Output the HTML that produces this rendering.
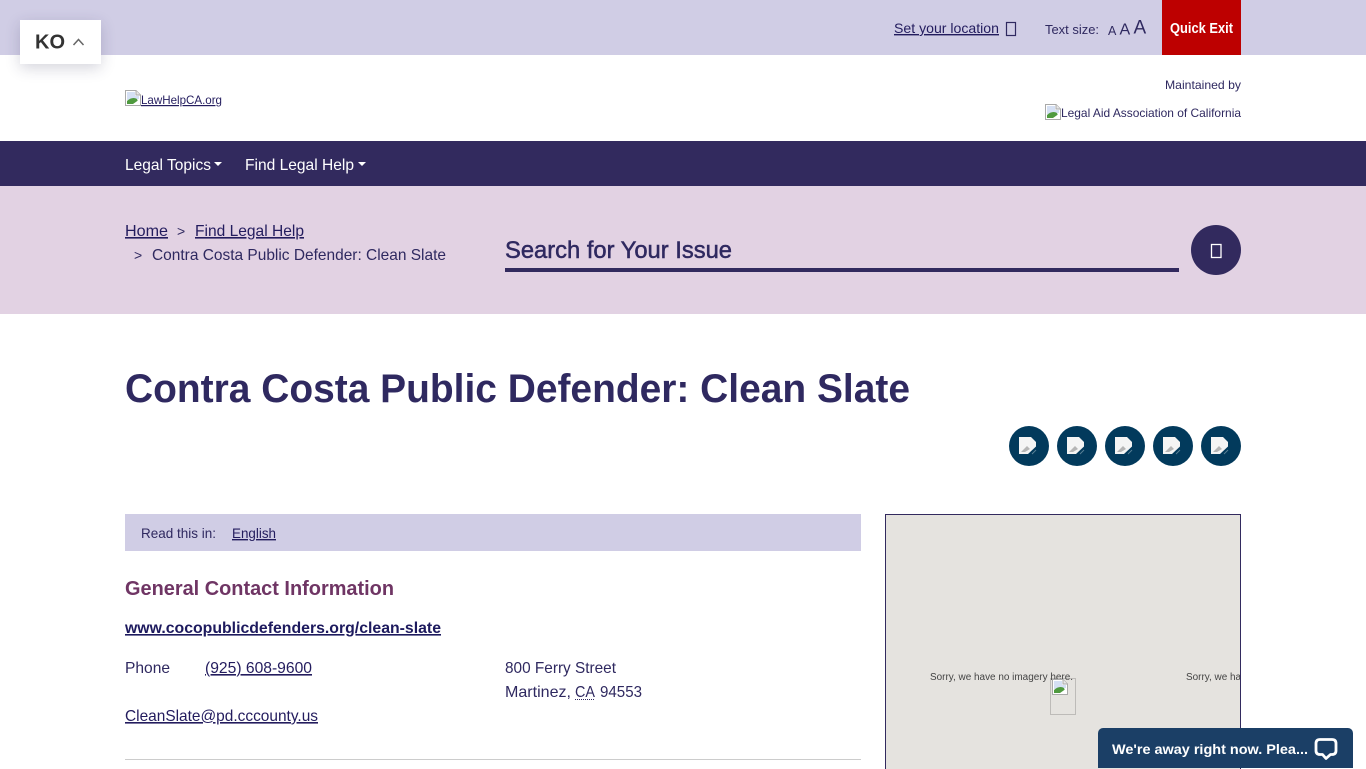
<!DOCTYPE html>
<html lang="en"><head><meta charset="utf-8"><title>Contra Costa Public Defender: Clean Slate</title>
<style>
html,body{margin:0;padding:0;width:1366px;height:768px;overflow:hidden;background:#fff}
.b{position:absolute}
svg{position:absolute;left:0;top:0}
text{font-family:"Liberation Sans",Arial,sans-serif;fill:#2f2960;white-space:pre}
.u{text-decoration:underline}
.lk{fill:#231c5e}
</style></head><body>
<div class="b" style="left:0;top:0;width:1366px;height:55px;background:#d0cde5"></div>
<div class="b" style="left:1162px;top:0;width:79px;height:55px;background:#bd0000"></div>
<div class="b" style="left:0;top:141px;width:1366px;height:45px;background:#322a5e"></div>
<div class="b" style="left:0;top:186px;width:1366px;height:128px;background:#e2d2e3"></div>
<div class="b" style="left:505px;top:268px;width:674px;height:4px;background:#322a5e"></div>
<div class="b" style="left:1191px;top:225px;width:50px;height:50px;border-radius:50%;background:#322a5e"></div>
<div class="b" style="left:125px;top:514px;width:736px;height:37px;background:#d0cde5"></div>
<div class="b" style="left:125px;top:759px;width:736px;height:1px;background:#ccc"></div>
<div class="b" style="left:885px;top:514px;width:354px;height:254px;background:#e5e3df;border:1px solid #322a5e;border-bottom:0"></div>
<div class="b" style="left:1050px;top:678px;width:24px;height:35px;border:1px solid #bdbbb8"></div>
<div class="b" style="left:1009px;top:426px;width:40px;height:40px;border-radius:50%;background:#023a5c"></div>
<div class="b" style="left:1057px;top:426px;width:40px;height:40px;border-radius:50%;background:#023a5c"></div>
<div class="b" style="left:1105px;top:426px;width:40px;height:40px;border-radius:50%;background:#023a5c"></div>
<div class="b" style="left:1153px;top:426px;width:40px;height:40px;border-radius:50%;background:#023a5c"></div>
<div class="b" style="left:1201px;top:426px;width:40px;height:40px;border-radius:50%;background:#023a5c"></div>
<div class="b" style="left:20px;top:20px;width:81px;height:44px;background:#fff;box-shadow:0 4px 14px rgba(40,40,80,.2)"></div>
<div class="b" style="left:1098px;top:728px;width:255px;height:40px;background:#1b3f66;border-radius:5px 5px 0 0"></div>

<svg width="1366" height="768" viewBox="0 0 1366 768" xmlns="http://www.w3.org/2000/svg">
<defs>
<g id="bi"><path d="M.5.5H11L15.500 5V15.500H.5Z" fill="#fff" stroke="#a9a9a9"/><path d="M11 .5V5H15.500" fill="#e8e8e8" stroke="#a9a9a9"/><path d="M2 2H10V6H14V9L2 10Z" fill="#d5e0f4"/><path d="M2 14V11C5 8 9 7 12 9L14 14Z" fill="#4f9a3f"/><path d="M8 14L13 10.500L14 11V14Z" fill="#fff"/></g>
<g id="bw"><path d="M0 0H12L17 5V10L10 17H0Z" fill="#f4f4f4"/><path d="M2 15L8 9L11 12L6 15Z" fill="#b5b5b5"/><path d="M9 17L17 9.500V12L12 17Z" fill="#023a5c"/><path d="M13 17L17 13" stroke="#5a7f96"/></g>
<clipPath id="mc"><rect x="886" y="515" width="354" height="253"/></clipPath>
</defs>

<!-- top bar -->
<a href="#"><text class="u lk" x="894" y="33" font-size="14" textLength="105" lengthAdjust="spacingAndGlyphs">Set your location</text></a>
<rect x="1006.500" y="22.500" width="9" height="13" fill="none" stroke="#2f2960" stroke-width="1.200"/>
<text x="1045" y="34" font-size="13" textLength="54" lengthAdjust="spacingAndGlyphs">Text size:</text>
<text x="1108" y="35" font-size="12.500">A</text>
<text x="1119.500" y="34.500" font-size="16">A</text>
<text x="1133.500" y="33.500" font-size="19">A</text>
<text x="1170" y="33" font-size="14.500" font-weight="700" style="fill:#fff" textLength="63" lengthAdjust="spacingAndGlyphs">Quick Exit</text>

<!-- KO -->
<text x="35" y="48.500" font-size="20" font-weight="700" style="fill:#333" textLength="30" lengthAdjust="spacingAndGlyphs">KO</text>
<path d="M73.500 45L78.500 39.500L83.500 45" fill="none" stroke="#666" stroke-width="1.500"/>

<!-- header -->
<use href="#bi" x="125" y="90"/>
<a href="#"><text class="u lk" x="141" y="104" font-size="12" textLength="81" lengthAdjust="spacingAndGlyphs">LawHelpCA.org</text></a>
<text x="1165" y="89" font-size="12" textLength="76" lengthAdjust="spacingAndGlyphs">Maintained by</text>
<use href="#bi" x="1045" y="104"/>
<text x="1061" y="117" font-size="12" textLength="180" lengthAdjust="spacingAndGlyphs">Legal Aid Association of California</text>

<!-- nav -->
<text x="125" y="170" font-size="16" style="fill:#fff" textLength="86" lengthAdjust="spacingAndGlyphs">Legal Topics</text>
<path d="M214 162H222L218 166Z" fill="#fff"/>
<text x="245" y="170" font-size="16" style="fill:#fff" textLength="109" lengthAdjust="spacingAndGlyphs">Find Legal Help</text>
<path d="M358 162H366L362 166Z" fill="#fff"/>

<!-- breadcrumb -->
<a href="#"><text class="u lk" x="125" y="236" font-size="16" textLength="43" lengthAdjust="spacingAndGlyphs">Home</text></a>
<text x="177" y="236" font-size="14">&gt;</text>
<a href="#"><text class="u lk" x="195" y="236" font-size="16" textLength="109" lengthAdjust="spacingAndGlyphs">Find Legal Help</text></a>
<text x="134" y="260" font-size="14">&gt;</text>
<text x="152" y="260" font-size="16" textLength="294" lengthAdjust="spacingAndGlyphs">Contra Costa Public Defender: Clean Slate</text>

<!-- search -->
<text x="505" y="258" font-size="24" stroke="#2f2960" stroke-width=".5" textLength="227" lengthAdjust="spacingAndGlyphs">Search for Your Issue</text>
<rect x="1211.500" y="244.500" width="9.500" height="13" fill="none" stroke="#fff" stroke-width="1.300"/>

<!-- title -->
<text x="125" y="402" font-size="40" font-weight="700" textLength="785" lengthAdjust="spacingAndGlyphs">Contra Costa Public Defender: Clean Slate</text>
<use href="#bw" x="1019" y="437"/><use href="#bw" x="1067" y="437"/><use href="#bw" x="1115" y="437"/><use href="#bw" x="1163" y="437"/><use href="#bw" x="1211" y="437"/>

<!-- content -->
<text x="141" y="538" font-size="14" textLength="75" lengthAdjust="spacingAndGlyphs">Read this in:</text>
<a href="#"><text class="u lk" x="232" y="538" font-size="14" textLength="44" lengthAdjust="spacingAndGlyphs">English</text></a>
<text x="125" y="595" font-size="20" font-weight="700" style="fill:#6f3564" textLength="269" lengthAdjust="spacingAndGlyphs">General Contact Information</text>
<a href="#"><text class="u" x="125" y="633" font-size="16" font-weight="700" style="fill:#1d1a5e" textLength="316" lengthAdjust="spacingAndGlyphs">www.cocopublicdefenders.org/clean-slate</text></a>
<text x="125" y="673" font-size="16" textLength="45" lengthAdjust="spacingAndGlyphs">Phone</text>
<a href="#"><text class="u lk" x="205" y="673" font-size="16" textLength="107" lengthAdjust="spacingAndGlyphs">(925) 608-9600</text></a>
<a href="#"><text class="u lk" x="125" y="721" font-size="16" textLength="193" lengthAdjust="spacingAndGlyphs">CleanSlate@pd.cccounty.us</text></a>
<text x="505" y="673" font-size="16" textLength="111" lengthAdjust="spacingAndGlyphs">800 Ferry Street</text>
<text x="505" y="697" font-size="16" textLength="66" lengthAdjust="spacingAndGlyphs">Martinez,</text>
<text x="575" y="697" font-size="16" textLength="20" lengthAdjust="spacingAndGlyphs">CA</text>
<path d="M575 699.500H595" stroke="#2f2960" stroke-dasharray="1 1"/>
<text x="600" y="697" font-size="16" textLength="42" lengthAdjust="spacingAndGlyphs">94553</text>

<!-- map -->
<g clip-path="url(#mc)">
<text x="930" y="680" font-size="10" style="fill:#444" textLength="143" lengthAdjust="spacingAndGlyphs">Sorry, we have no imagery here.</text>
<text x="1186" y="680" font-size="10" style="fill:#444" textLength="143" lengthAdjust="spacingAndGlyphs">Sorry, we have no imagery here.</text>
</g>
<use href="#bi" x="1052" y="679"/>

<!-- chat -->
<text x="1112" y="754" font-size="14" font-weight="700" style="fill:#fff" textLength="196" lengthAdjust="spacingAndGlyphs">We're away right now. Plea...</text>
<path d="M1320 739.500H1332Q1336 739.500 1336 743.500V750.500Q1336 754.500 1332 754.500H1330.500L1326 758.500L1322.500 754.500H1320Q1316 754.500 1316 750.500V743.500Q1316 739.500 1320 739.500Z" fill="none" stroke="#fff" stroke-width="2.800" stroke-linejoin="round"/>
</svg>
</body></html>
